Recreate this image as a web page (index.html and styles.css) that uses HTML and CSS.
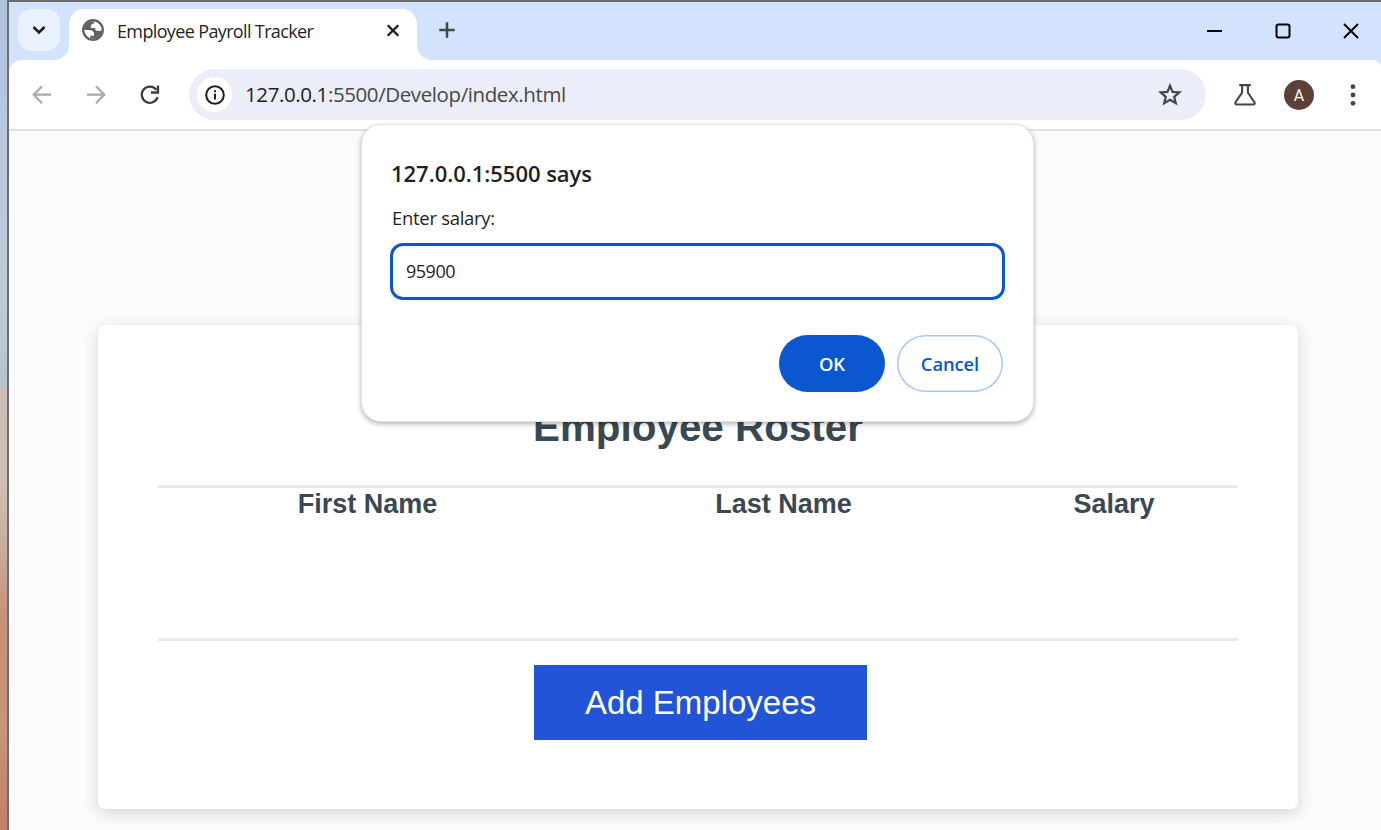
FILE: index.html
```html
<!DOCTYPE html>
<html lang="en">
<head>
<meta charset="utf-8">
<title>Employee Payroll Tracker</title>
<link rel="stylesheet" href="styles.css">
</head>
<body>
<div class="desktop"></div>
<div class="window">
  <header class="tab-strip">
    <button class="tab-search" aria-label="Search tabs"><svg width="42" height="42" viewBox="0 0 42 42"><path d="M15.500 18l5.500 5.500 5.500-5.500" fill="none" stroke="#1c1d1f" stroke-width="2.600"/></svg></button>
    <div class="tab">
      <svg class="globe" width="22" height="22" viewBox="2 2 20 20"><circle cx="12" cy="12" r="8.900" fill="#fff" stroke="#5f6368" stroke-width="2.100"/><path d="M4 12h4.400c3.407.022 4.922 1.730 4.543 5.127H9.488v2.470a8.004 8.004 0 0 0 10.498-8.083C19.327 12.504 18.332 13 17 13c-2.137 0-3.206-.916-3.206-2.750h-3.748c-.274-2.728.683-4.092 2.870-4.092 0-.975.327-1.597.811-1.970A8.004 8.004 0 0 0 4 12z" fill="#5f6368"/></svg>
      <span class="tab-title">Employee Payroll Tracker</span>
      <svg class="tab-close" width="14" height="14" viewBox="0 0 14 14"><path d="M1.700 1.200l10.600 10.600M12.300 1.200L1.700 11.800" stroke="#1c1d1f" stroke-width="2.300"/></svg>
    </div>
    <svg class="new-tab" width="16" height="16" viewBox="0 0 16 16"><path d="M8 .3v15.400M.3 8h15.400" stroke="#444746" stroke-width="2.500"/></svg>
    <div class="window-controls">
      <svg width="16" height="16" viewBox="0 0 16 16"><path d="M1 8h15" stroke="#000" stroke-width="2"/></svg>
      <svg width="16" height="16" viewBox="0 0 16 16"><rect x="1.500" y="1.500" width="13" height="13" rx="2" fill="none" stroke="#000" stroke-width="2"/></svg>
      <svg width="16" height="16" viewBox="0 0 16 16"><path d="M1 1l14 14M15 1L1 15" stroke="#000" stroke-width="1.900"/></svg>
    </div>
  </header>
  <nav class="toolbar">
    <svg class="back" width="20" height="20" viewBox="0 0 20 20"><path d="M19 9.700H2M10 1.200L1.700 9.700l8.300 8.500" fill="none" stroke="#a8a9a9" stroke-width="2.200"/></svg>
    <svg class="forward" width="20" height="20" viewBox="0 0 20 20"><path d="M1 9.700h17M10 1.200l8.300 8.500-8.300 8.500" fill="none" stroke="#a8a9a9" stroke-width="2.200"/></svg>
    <svg class="reload" width="20" height="20" viewBox="0 0 20 20"><path d="M16.400 4.900A8.100 8.100 0 1 0 17.600 12.200" fill="none" stroke="#3c3e3e" stroke-width="2.300"/><path d="M18 .5v7h-7" fill="none" stroke="#3c3e3e" stroke-width="2.300"/></svg>
    <div class="omnibox">
      <span class="site-info"><svg width="20" height="20" viewBox="0 0 20 20"><circle cx="10" cy="10" r="8.800" fill="none" stroke="#1c1d1f" stroke-width="2"/><path d="M10 8.800v5.700M10 5.300v2" stroke="#1c1d1f" stroke-width="2"/></svg></span>
      <span class="url"><b>127.0.0.1</b>:5500/Develop/index.html</span>
      <svg class="star" width="24" height="24" viewBox="0 0 24 24"><path d="M12 2.700l2.600 6.200 6.700.5-5.100 4.400 1.600 6.500-5.800-3.500-5.800 3.500 1.600-6.500-5.100-4.400 6.700-.5z" fill="none" stroke="#444746" stroke-width="2.200"/></svg>
    </div>
    <svg class="flask" width="22" height="22" viewBox="0 0 22 22"><path d="M5.200 1.100h11.600M8.100 1.500v7.200L1.700 18c-.8 1.300-.2 2.500 1.100 2.500h16.400c1.300 0 1.900-1.200 1.100-2.500l-6.400-9.300V1.500" fill="none" stroke="#444746" stroke-width="2.100"/></svg>
    <span class="avatar">A</span>
    <svg class="menu" width="6" height="22" viewBox="0 0 6 22" fill="#444746"><circle cx="3" cy="2.700" r="2.400"/><circle cx="3" cy="11" r="2.400"/><circle cx="3" cy="19.300" r="2.400"/></svg>
  </nav>
  <main class="page">
    <section class="card">
      <h2>Employee Roster</h2>
      <table class="roster">
        <thead><tr><th class="col-first">First Name</th><th class="col-last">Last Name</th><th>Salary</th></tr></thead>
        <tbody><tr><td colspan="3"></td></tr></tbody>
      </table>
      <button class="add">Add Employees</button>
    </section>
  </main>
</div>
<div class="dialog" role="dialog">
  <div class="dialog-title">127.0.0.1:5500 says</div>
  <label class="dialog-label" for="salary">Enter salary:</label>
  <input class="dialog-input" id="salary" type="text" value="95900">
  <div class="dialog-actions"><button class="ok">OK</button><button class="cancel">Cancel</button></div>
</div>
</body>
</html>
```
FILE: styles.css
```css
* { box-sizing: border-box; }
body { margin: 0; height: 830px; overflow: hidden; display: flex; font-family: "Open Sans", "Noto Sans", sans-serif; }
svg { display: block; flex: none; }
button { font: inherit; border: 0; padding: 0; margin: 0; }
.desktop { width: 7px; flex: none; background: linear-gradient(#b0c4e0 0, #b7c7df 130px, #becbd8 300px, #b4c4cd 388px, #cdbcb5 389px, #cfc0b6 480px, #c9afa2 540px, #c69078 620px, #c6957c 730px, #c37d69 830px); }
.window { flex: 1; display: flex; flex-direction: column; border-left: 2px solid #6f6e6d; border-top: 2px solid #6c6c6f; min-width: 0; background: #d3e3fd; }
.tab-strip { height: 58px; flex: none; display: flex; padding-left: 9px; background: #d3e3fd; }
.tab-search { width: 42px; height: 42px; margin-top: 7px; border-radius: 14px; background: #eaf1fe; }
.tab { position: relative; width: 348px; height: 51px; margin: 7px 0 0 9px; border-radius: 15px 15px 0 0; background: #fff; display: flex; align-items: center; padding: 0 17px 7px 13px; }
.tab::before, .tab::after { content: ""; position: absolute; bottom: 0; width: 15px; height: 15px; }
.tab::before { left: -15px; background: radial-gradient(circle at 0 0, transparent 14.500px, #fff 15.500px); }
.tab::after { right: -15px; background: radial-gradient(circle at 100% 0, transparent 14.500px, #fff 15.500px); }
.globe { margin-bottom: 2px; }
.tab-title { margin-left: 13px; flex: 1; font-size: 18px; color: #1f1f1f; white-space: nowrap; letter-spacing: -.64px; }
.new-tab { margin: 20px 0 0 22px; }
.window-controls { margin: 21px 22px 0 auto; display: flex; gap: 52.500px; }
.toolbar { height: 71px; flex: none; background: #fff; border-radius: 13px 8px 0 0; border-bottom: 2px solid #dfe1e1; display: flex; align-items: center; padding-left: 23px; }
.forward { margin-left: 34px; }
.reload { margin-left: 34px; }
.omnibox { margin-left: 29px; width: 1017px; height: 51px; border-radius: 26px; background: #ebeef8; display: flex; align-items: center; padding: 0 24px 0 8px; }
.site-info { width: 35px; height: 35px; border-radius: 50%; background: #fff; display: grid; place-items: center; }
.url { margin: 0 0 2px 13px; flex: 1; font-size: 20.500px; color: #474747; letter-spacing: -.4px; white-space: nowrap; }
.url b { font-weight: 400; color: #1f1f1f; }
.flask { margin-left: 28px; }
.avatar { margin-left: 28px; width: 30px; height: 30px; border-radius: 50%; background: #5d4037; color: #fff; font: 16px/31px Roboto, sans-serif; text-align: center; }
.menu { margin-left: 36px; }
.page { flex: 1; background: #f9fbfd; padding: 194px 83px 0 89px; }
.card { width: 1200px; height: 484px; border-radius: 7px; background: #fff; box-shadow: 0 4px 15px rgba(0,0,0,.16); padding: 79px 60px 0; font-family: "Liberation Sans", Arial, sans-serif; color: #3a4853; display: flex; flex-direction: column; align-items: center; }
.card h2 { margin: 0 0 35px; font-size: 40.400px; line-height: 46px; }
.roster { width: 1080px; table-layout: fixed; border-collapse: collapse; }
.roster thead { border-top: 3px solid #e8e9ea; }
.roster tbody { border-bottom: 3px solid #e8e9ea; }
.roster th { padding: 0; font-size: 27px; line-height: 32px; }
.roster td { padding: 0; height: 119px; }
.col-first { width: 419px; }
.col-last { width: 413px; }
.add { width: 333px; height: 75px; margin: 24px 0 0 5px; padding-top: 1px; background: #2154d6; color: #fff; font-size: 33px; }
.dialog { position: absolute; left: 361px; top: 124px; width: 673px; height: 298px; border-radius: 20px; border: 1px solid #e2e3e3; background: #fff; box-shadow: 0 2px 5px rgba(0,0,0,.3); padding: 32px 28px 0; display: flex; flex-direction: column; color: #1f1f1f; }
.dialog-title { margin-left: 1px; font-size: 22px; line-height: 32px; font-weight: 600; letter-spacing: -.03px; white-space: nowrap; }
.dialog-label { margin: 16px 0 0 2px; font-size: 18.500px; line-height: 26px; letter-spacing: -.3px; }
.dialog-input { margin-top: 12px; width: 615px; height: 57px; border: 3px solid #0b57d0; border-radius: 13px; outline: 0; padding: 0 13px 2px; font: 18px "Open Sans", sans-serif; letter-spacing: -.5px; color: #1f1f1f; background: #fff; }
.dialog-actions { margin: 35px 2px 0 0; display: flex; justify-content: flex-end; gap: 12px; }
.dialog-actions button { width: 106px; height: 57px; border-radius: 29px; font-size: 18.400px; font-weight: 600; }
.ok { background: #0b57d0; color: #fff; }
.dialog-actions .cancel { background: #fff; color: #0b57d0; box-shadow: inset 0 0 0 1.500px #a8c7fa; letter-spacing: -.1px; }
```
